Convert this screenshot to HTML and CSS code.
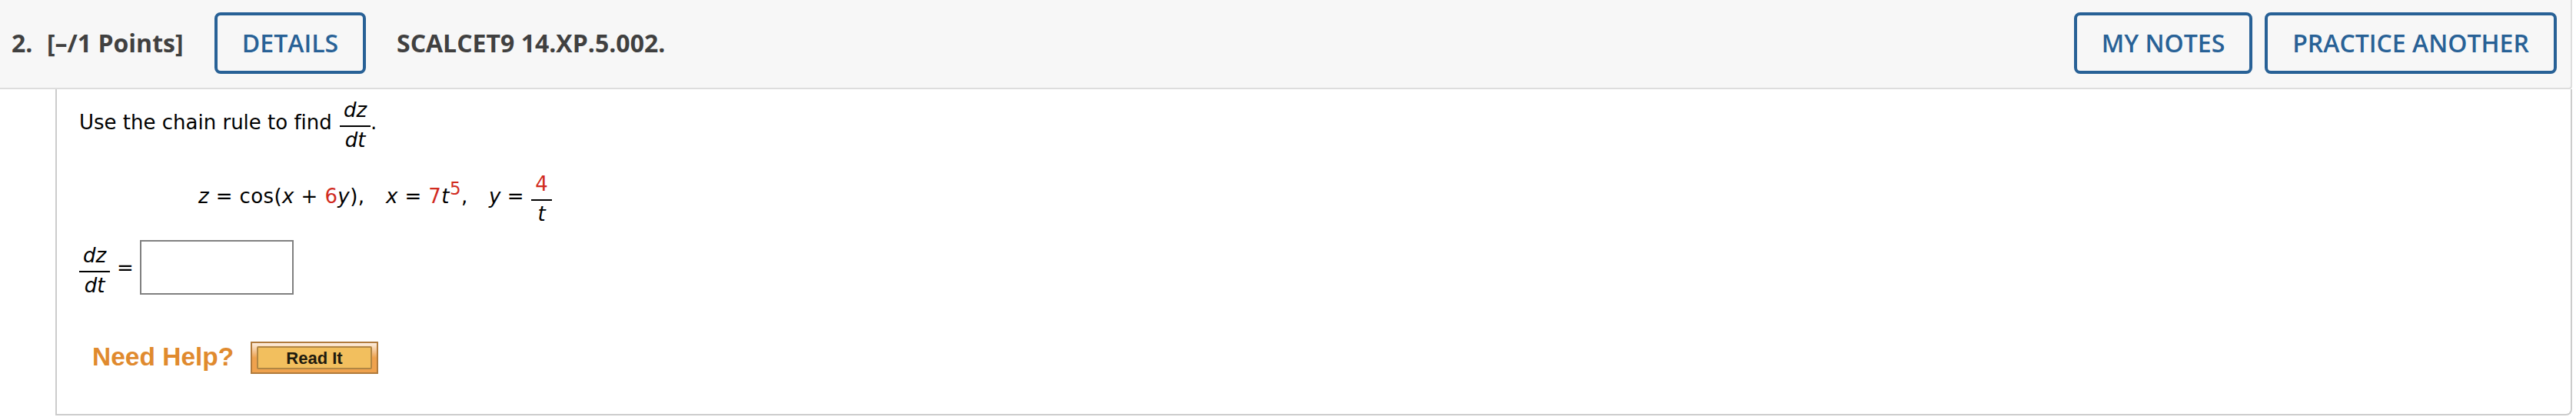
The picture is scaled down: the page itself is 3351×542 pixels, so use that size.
FILE: index.html
```html
<!DOCTYPE html>
<html>
 <head>
  <meta charset="utf-8">
  <title>Question 2</title>
  <link rel="stylesheet" href="styles.css">
 </head>
 <body>
  <div class="header">
    <span class="number">2.</span>
    <span class="points">[–/1 Points]</span>
    <button class="button details">DETAILS</button>
    <span class="name">SCALCET9 14.XP.5.002.</span>
    <button class="button notes">MY NOTES</button>
    <button class="button practice">PRACTICE ANOTHER</button>
  </div>

  <div class="content">
    <div class="line question">
      <span class="text words">Use the chain rule to find</span>
      <span class="fraction"><i class="top">dz</i><i>dt</i></span>
      <span class="text">.</span>
    </div>

    <div class="line formula">
      <span class="text part1"><i>z</i> = cos(<i>x</i> + <span class="red">6</span><i>y</i>),</span>
      <span class="text part2"><i>x</i> = <span class="red">7</span><i>t</i><sup class="red">5</sup>,</span>
      <span class="text part3"><i>y</i> =</span>
      <span class="fraction small"><span class="top red">4</span><i>t</i></span>
    </div>

    <div class="line answer">
      <span class="fraction"><i class="top">dz</i><i>dt</i></span>
      <span class="text equals">=</span>
      <input class="box" type="text">
    </div>

    <div class="help">
      <span class="needhelp">Need Help?</span>
      <button class="readit"><span class="readit-text">Read It</span></button>
    </div>
  </div>
 </body>
</html>
```

FILE: styles.css
```css
body {
  margin: 0;
  background: #fff;
}
.header {
  box-sizing: border-box;
  display: flex;
  align-items: center;
  width: 3346px;
  height: 116px;
  padding: 0 18px 2px 15px;
  background-color: #f7f7f7;
  border-right: 2px solid #ddd;
  border-bottom: 2px solid #ddd;
  border-bottom-right-radius: 4px;
  font-family: "Open Sans", sans-serif;
  font-size: 32px;
  font-weight: 700;
  color: #404040;
  white-space: nowrap;
}
.number {
  width: 46px;
}
.points {
  width: 218px;
}
.number, .points, .name {
  margin-bottom: 2px;
}
.button {
  box-sizing: border-box;
  height: 80px;
  padding: 0 0 2px;
  border: 4px solid #286196;
  border-radius: 8px;
  background: none;
  color: #286196;
  font-family: "Open Sans", sans-serif;
  font-size: 32px;
  font-weight: 600;
}
.details {
  width: 197px;
}
.name {
  margin-left: 40px;
}
.notes {
  width: 232px;
  margin-left: auto;
}
.practice {
  width: 380px;
  margin-left: 16px;
}
.content {
  box-sizing: border-box;
  width: 3274px;
  height: 424px;
  margin-left: 72px;
  padding: 8px 0 0 29px;
  border: 2px solid #ccc;
  border-top: none;
  border-bottom-right-radius: 8px;
  font-family: Verdana, "DejaVu Sans", sans-serif;
  font-size: 26px;
  font-variant-ligatures: none;
  color: #000;
}
.line {
  display: flex;
  align-items: center;
  height: 77px;
  line-height: 32px;
  white-space: pre;
}
.text {
  margin-bottom: 7px;
}
.words {
  width: 339px;
}
.fraction {
  display: flex;
  flex-direction: column;
  align-items: center;
  width: 40px;
  line-height: 34px;
}
.top {
  align-self: stretch;
  padding-bottom: 3px;
  text-align: center;
  border-bottom: 2px solid #000;
}
.small {
  width: 27px;
}
.red {
  color: #d12b1f;
}
.small .red {
  border-color: #000;
}
.formula {
  margin-top: 19px;
  padding-left: 155px;
}
.part1 {
  width: 244px;
  letter-spacing: 0.4px;
}
.part2 {
  width: 134px;
  letter-spacing: 0.4px;
}
.part3 {
  width: 55px;
}
sup {
  font-size: 23px;
  line-height: 0;
  vertical-align: 11px;
}
.answer {
  margin-top: 16px;
}
.equals {
  width: 30px;
  margin-left: 9px;
}
.box {
  box-sizing: border-box;
  width: 200px;
  height: 71px;
  margin: 0 0 8px;
  border: 2px solid #808080;
  font-size: 26px;
}
.help {
  display: flex;
  align-items: center;
  margin-top: 54px;
  padding-left: 17px;
  font-family: Arial, "Liberation Sans", sans-serif;
  font-weight: bold;
}
.needhelp {
  width: 206px;
  margin-bottom: 2px;
  font-size: 33.5px;
  color: #e08a2e;
}
.readit {
  box-sizing: border-box;
  width: 166px;
  height: 42px;
  margin: 0;
  padding: 4px 6px;
  border: 2px solid #b07a3c;
  background: linear-gradient(#fdeee0, #efa24e 50%);
  font-family: Arial, "Liberation Sans", sans-serif;
  font-size: 22px;
  font-weight: bold;
  color: #1d1a0e;
}
.readit-text {
  box-sizing: border-box;
  display: block;
  height: 30px;
  line-height: 28px;
  border: 2px solid #b18643;
  border-radius: 2px;
  background-color: #f2bf5e;
}
```
